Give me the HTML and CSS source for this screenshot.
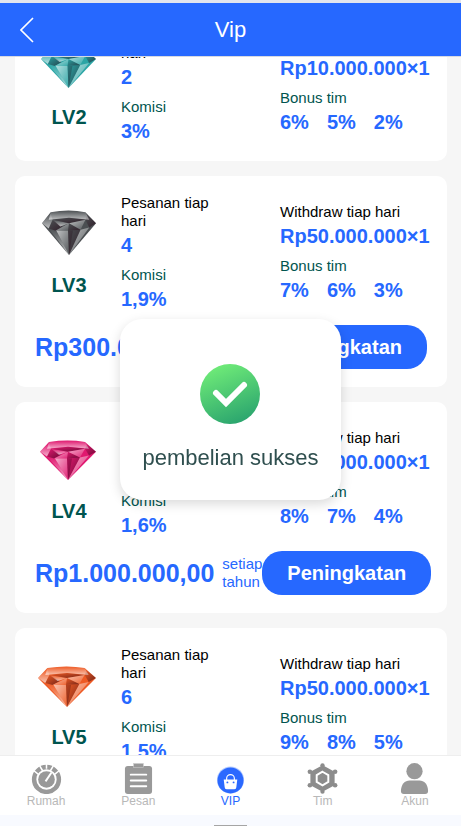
FILE: index.html
```html
<!DOCTYPE html>
<html lang="id">
<head>
    <meta charset="UTF-8">
    <meta name="viewport" content="width=device-width, initial-scale=1.0">
    <title>Vip</title>
    <link rel="stylesheet" href="styles.css">
</head>
<body>
    <!-- Gem shape, shared by all levels -->
    <svg class="defs" width="0" height="0" aria-hidden="true">
        <defs>
            <linearGradient id="shade" x1="0" y1="0" x2="1" y2="1">
                <stop offset="0" stop-color="#fff" stop-opacity="0.65"/>
                <stop offset="1" stop-color="#fff" stop-opacity="0.05"/>
            </linearGradient>
            <linearGradient id="glow" x1="0" y1="0" x2="0" y2="1">
                <stop offset="0" stop-color="#fff" stop-opacity="0"/>
                <stop offset="1" stop-color="#fff" stop-opacity="0.65"/>
            </linearGradient>
            <linearGradient id="deep" x1="0" y1="0" x2="1" y2="1">
                <stop offset="0" stop-color="#200010" stop-opacity="0"/>
                <stop offset="1" stop-color="#200010" stop-opacity="0.6"/>
            </linearGradient>
            <symbol id="gem" viewBox="0 0 58 42" preserveAspectRatio="none">
                <path fill="currentColor" d="M10 2Q29-1 46 2L57 12 29 41 1 12Z"/>
                <path fill="url(#glow)" d="M10 2Q29-1 46 2L50 9 29 7 8 9Z"/>
                <path fill="url(#glow)" d="M1 12 10 3 12 9 8 17Z"/>
                <path fill="url(#deep)" d="M8 17 12 9 22 15 15 19Z"/>
                <path fill="url(#glow)" d="M12 9 29 12 20 15Z"/>
                <path fill="url(#deep)" d="M12 9 29 7 46 9 29 12Z"/>
                <path fill="url(#shade)" d="M15 19 29 12 28 19Z"/>
                <path fill="url(#deep)" d="M29 12 41 18 28 19Z"/>
                <path fill="url(#shade)" d="M29 12 46 9 41 18Z"/>
                <path fill="url(#deep)" d="M46 9 48 4 57 12 50 16Z"/>
                <path fill="url(#glow)" d="M8 17 16 19 29 41Z"/>
                <path fill="url(#shade)" d="M16 19 28 19 29 41Z"/>
                <path fill="url(#deep)" d="M28 19 41 18 29 41Z"/>
                <path fill="#200010" fill-opacity="0.25" d="M28 19 33 19 29 41Z"/>
                <path fill="url(#shade)" d="M41 18 50 16 29 41Z"/>
            </symbol>
        </defs>
    </svg>

    <div class="app">
        <header class="header">
            <button type="button" class="back" aria-label="Kembali">
                <svg width="14" height="26" viewBox="0 0 14 26"><path d="M13 1 1 13 13 25" fill="none" stroke="#fff" stroke-width="1.6"/></svg>
            </button>
            <h1>Vip</h1>
        </header>

        <main class="content" id="content">
            <section class="card">
                <div class="info">
                    <div class="level">
                        <svg class="gem teal" viewBox="0 0 60 54"><use href="#gem" x="1" y="6" width="57" height="42"/></svg>
                        <h2>LV2</h2>
                    </div>
                    <dl class="stats orders">
                        <dt>Pesanan tiap hari</dt>
                        <dd>2</dd>
                        <dt class="green">Komisi</dt>
                        <dd>3%</dd>
                    </dl>
                    <dl class="stats">
                        <dt>Withdraw tiap hari</dt>
                        <dd>Rp10.000.000×1</dd>
                        <dt class="green">Bonus tim</dt>
                        <dd class="bonus"><span>6%</span><span>5%</span><span>2%</span></dd>
                    </dl>
                </div>
            </section>

            <section class="card">
                <div class="info">
                    <div class="level">
                        <svg class="gem black" viewBox="0 0 60 54"><use href="#gem" x="2" y="1" width="56" height="46"/></svg>
                        <h2>LV3</h2>
                    </div>
                    <dl class="stats orders">
                        <dt>Pesanan tiap hari</dt>
                        <dd>4</dd>
                        <dt class="green">Komisi</dt>
                        <dd>1,9%</dd>
                    </dl>
                    <dl class="stats">
                        <dt>Withdraw tiap hari</dt>
                        <dd>Rp50.000.000×1</dd>
                        <dt class="green">Bonus tim</dt>
                        <dd class="bonus"><span>7%</span><span>6%</span><span>3%</span></dd>
                    </dl>
                </div>
                <div class="buy">
                    <strong class="price">Rp300.000,00</strong>
                    <span class="period">setiap tahun</span>
                    <button type="button" class="upgrade">Peningkatan</button>
                </div>
            </section>

            <section class="card">
                <div class="info">
                    <div class="level">
                        <svg class="gem pink" viewBox="0 0 60 54"><use href="#gem" x="0" y="5" width="58" height="41"/></svg>
                        <h2>LV4</h2>
                    </div>
                    <dl class="stats orders">
                        <dt>Pesanan tiap hari</dt>
                        <dd>5</dd>
                        <dt class="green">Komisi</dt>
                        <dd>1,6%</dd>
                    </dl>
                    <dl class="stats">
                        <dt>Withdraw tiap hari</dt>
                        <dd>Rp50.000.000×1</dd>
                        <dt class="green">Bonus tim</dt>
                        <dd class="bonus"><span>8%</span><span>7%</span><span>4%</span></dd>
                    </dl>
                </div>
                <div class="buy">
                    <strong class="price">Rp1.000.000,00</strong>
                    <span class="period">setiap tahun</span>
                    <button type="button" class="upgrade">Peningkatan</button>
                </div>
            </section>

            <section class="card">
                <div class="info">
                    <div class="level">
                        <svg class="gem orange" viewBox="0 0 60 54"><use href="#gem" x="-2" y="5" width="60" height="42"/></svg>
                        <h2>LV5</h2>
                    </div>
                    <dl class="stats orders">
                        <dt>Pesanan tiap hari</dt>
                        <dd>6</dd>
                        <dt class="green">Komisi</dt>
                        <dd>1,5%</dd>
                    </dl>
                    <dl class="stats">
                        <dt>Withdraw tiap hari</dt>
                        <dd>Rp50.000.000×1</dd>
                        <dt class="green">Bonus tim</dt>
                        <dd class="bonus"><span>9%</span><span>8%</span><span>5%</span></dd>
                    </dl>
                </div>
                <div class="buy">
                    <strong class="price">Rp3.000.000,00</strong>
                    <span class="period">setiap tahun</span>
                    <button type="button" class="upgrade">Peningkatan</button>
                </div>
            </section>
        </main>

        <nav class="tabbar">
            <a href="#rumah">
                <svg viewBox="0 0 32 32">
                    <circle cx="16" cy="17" r="12.8" fill="none" stroke="#999" stroke-width="4.6"/>
                    <circle cx="16" cy="17" r="8.6" fill="#999"/>
                    <path d="M3 8l5 4M9 3l3 5M16 0v6M23 3l-3 5M29 8l-5 4" stroke="#fff" stroke-width="1.6"/>
                    <path d="M15 19l6-9" stroke="#fff" stroke-width="2"/>
                </svg>
                <span>Rumah</span>
            </a>
            <a href="#pesan">
                <svg viewBox="0 0 32 32">
                    <rect x="2" y="3" width="28" height="29" rx="3" fill="#999"/>
                    <rect x="11" y="0.5" width="10" height="4" fill="#999" stroke="#ccc" stroke-width="0.6"/>
                    <path d="M8 12h16M8 18h16M8 24h16" stroke="#fff" stroke-width="2" stroke-linecap="round"/>
                </svg>
                <span>Pesan</span>
            </a>
            <a href="#vip" class="active">
                <svg viewBox="0 0 32 32">
                    <circle cx="16" cy="17.5" r="14" fill="#b5cbff"/>
                    <circle cx="16" cy="18" r="13.4" fill="#2b69ff"/>
                    <path d="M12 18v-2a4 4 0 0 1 8 0v2" fill="none" stroke="#fff" stroke-width="1.2"/>
                    <path d="M9 17h14l-1 8a2 2 0 0 1-2 2h-8a2 2 0 0 1-2-2Z" fill="#fff"/>
                    <circle cx="12.8" cy="20" r="1" fill="#2b69ff"/>
                    <circle cx="19.2" cy="20" r="1" fill="#2b69ff"/>
                </svg>
                <span>VIP</span>
            </a>
            <a href="#tim">
                <svg viewBox="0 0 32 32">
                    <path d="M16 4 27 10v12L16 28 5 22V10Z" fill="#8c8c8c" stroke="#8c8c8c" stroke-width="3"/>
                    <g fill="#8c8c8c">
                        <circle cx="16" cy="2.4" r="2.2"/>
                        <circle cx="29" cy="9" r="2.4"/>
                        <circle cx="29" cy="23" r="2.4"/>
                        <circle cx="16" cy="29.6" r="2.2"/>
                        <circle cx="3" cy="23" r="2.4"/>
                        <circle cx="3" cy="9" r="2.4"/>
                    </g>
                    <path d="M16 9 22 12.500v7L16 23l-6-3.500v-7Z" fill="none" stroke="#fff" stroke-width="2"/>
                </svg>
                <span>Tim</span>
            </a>
            <a href="#akun">
                <svg viewBox="0 0 32 32">
                    <circle cx="16" cy="8.500" r="8.400" fill="#999"/>
                    <path d="M2 29c0-7 4-11 9-11h10c5 0 9 4 9 11 0 2-1 3-3 3H5c-2 0-3-1-3-3Z" fill="#999"/>
                </svg>
                <span>Akun</span>
            </a>
        </nav>
        <div class="home-bar"></div>
    </div>

    <div class="overlay">
        <div class="toast" role="status">
            <svg width="60" height="60" viewBox="0 0 60 60">
                <defs>
                    <linearGradient id="ok" x1="0.3" y1="0" x2="0.7" y2="1">
                        <stop offset="0" stop-color="#70ec78"/>
                        <stop offset="1" stop-color="#29a36e"/>
                    </linearGradient>
                </defs>
                <circle cx="30" cy="30" r="30" fill="url(#ok)"/>
                <path d="M16 29 26 39 44 21" fill="none" stroke="#fff" stroke-width="6" stroke-linecap="round"/>
            </svg>
            <p>pembelian sukses</p>
        </div>
    </div>

    <script>
        document.getElementById('content').scrollTop = 64;
    </script>
</body>
</html>
```
FILE: styles.css
```css
* {
    margin: 0;
    padding: 0;
    box-sizing: border-box;
}

body {
    font-family: "Liberation Sans", Arial, sans-serif;
    font-size: 15px;
    line-height: 18px;
    color: #000;
    background: #f6f6f6;
}

button {
    font-family: inherit;
    border: none;
    cursor: pointer;
}

.defs {
    position: absolute;
}

.app {
    display: flex;
    flex-direction: column;
    height: 100vh;
}

.header {
    display: grid;
    grid-template-columns: 54px 1fr 54px;
    align-items: center;
    height: 57px;
    flex: none;
    background: #2668ff;
    border-top: 3px solid #e2e5ee;
    border-bottom: 1px solid #d5d9e2;
}

.header h1 {
    font-size: 22px;
    line-height: 26px;
    font-weight: 400;
    text-align: center;
    color: #fff;
}

.back {
    display: flex;
    padding: 0 20px;
    background: none;
}

.content {
    flex: 1;
    min-height: 0;
    overflow-y: auto;
    scrollbar-width: none;
    padding: 15px 14px 15px 15px;
}

.card {
    padding: 18px 20px;
    margin-bottom: 15px;
    background: #fff;
    border-radius: 10px;
}

.info {
    display: grid;
    grid-template-columns: 68px 1fr 147px;
    column-gap: 18px;
    align-items: center;
}

.level {
    display: flex;
    flex-direction: column;
    align-items: center;
    gap: 10px;
}

.level h2 {
    font-size: 20px;
    line-height: 24px;
    color: #00554f;
}

.gem {
    width: 60px;
    height: 54px;
    overflow: visible;
}

.teal { color: #2ba5a5; }
.black { color: #4b4f52; }
.pink { color: #e0186f; }
.orange { color: #ee5a24; }

.orders {
    max-width: 100px;
}

.stats dt {
    margin-bottom: 3px;
}

.stats dd {
    font-size: 20px;
    line-height: 24px;
    font-weight: bold;
    color: #2668ff;
    white-space: nowrap;
}

.stats .green {
    margin-top: 9px;
    color: #00554f;
}

.bonus {
    display: flex;
    gap: 18px;
}

.buy {
    display: flex;
    align-items: center;
    margin-top: 14px;
}

.price {
    font-size: 25px;
    line-height: 30px;
    color: #2668ff;
}

.period {
    flex: 0 0 40px;
    margin-left: 8px;
    color: #2668ff;
}

.upgrade {
    flex: none;
    height: 44px;
    margin-left: auto;
    padding: 0 25px;
    font-size: 20px;
    font-weight: bold;
    color: #fff;
    background: #2668ff;
    border-radius: 20px;
}

.tabbar {
    display: flex;
    flex: none;
    height: 60px;
    padding-top: 7px;
    background: #fff;
    border-top: 1px solid #eee;
}

.tabbar a {
    flex: 1;
    display: flex;
    flex-direction: column;
    align-items: center;
    font-size: 12px;
    line-height: 14px;
    color: #b8b8b8;
    text-decoration: none;
}

.tabbar svg {
    width: 31px;
    height: 31px;
}

.tabbar .active {
    color: #2668ff;
}

.home-bar {
    flex: none;
    height: 11px;
    background: linear-gradient(#a5a5a5, #a5a5a5) center bottom / 33px 1px no-repeat #f8faff;
}

/* Message over the page */
.overlay {
    position: fixed;
    inset: 0;
    display: flex;
    justify-content: center;
    align-items: center;
    padding-bottom: 7px;
}

.toast {
    padding: 45px 22px 28px;
    text-align: center;
    background: #fff;
    border-radius: 22px;
    box-shadow: 0 4px 12px rgba(0, 0, 0, 0.15);
}

.toast svg {
    display: block;
    margin: 0 auto;
}

.toast p {
    margin-top: 20px;
    font-size: 22px;
    line-height: 28px;
    color: #2f4f4f;
}
```
